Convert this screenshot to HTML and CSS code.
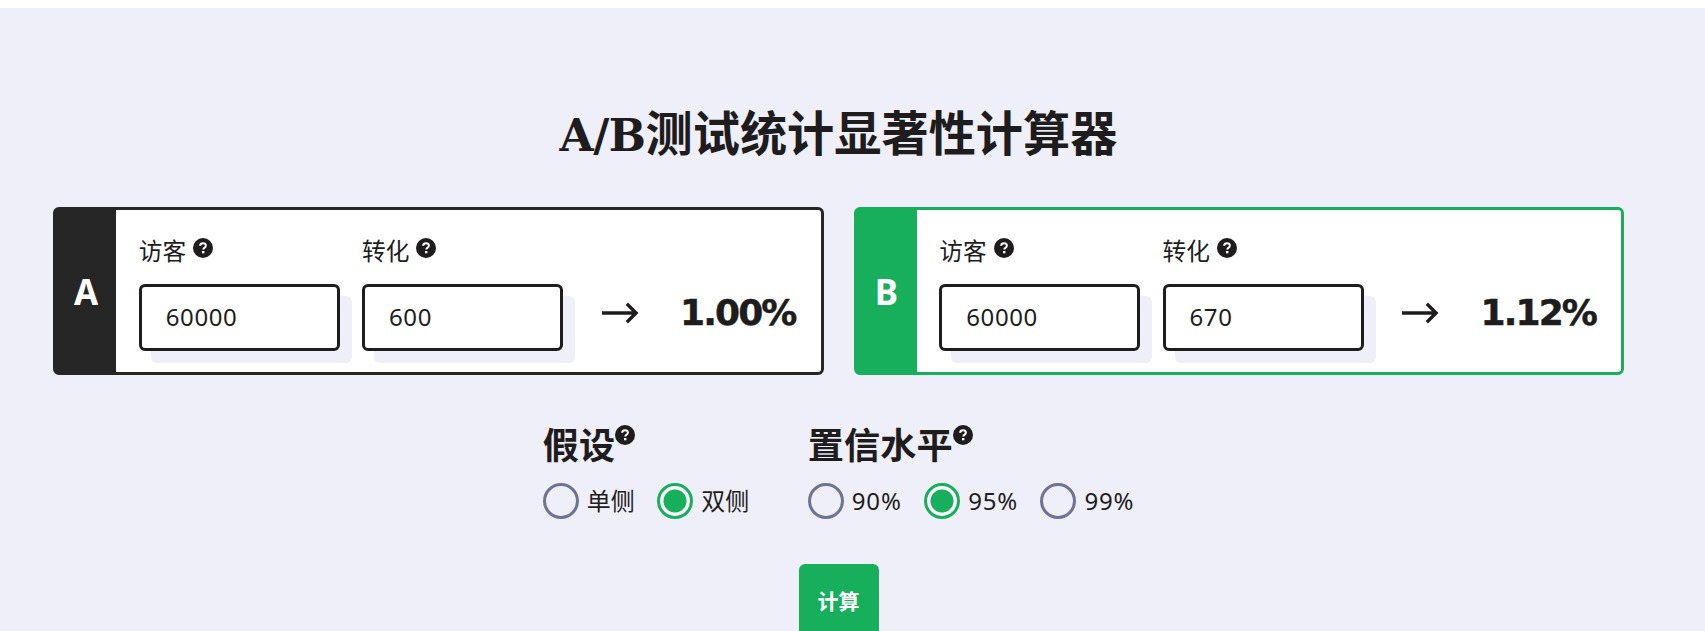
FILE: index.html
```html
<!DOCTYPE html>
<html lang="zh-CN">
<head>
    <meta charset="UTF-8">
    <meta name="viewport" content="width=device-width, initial-scale=1.0">
    <title>A/B测试统计显著性计算器</title>
    <link rel="stylesheet" href="styles.css">
</head>
<body>

    <svg class="icon-defs" width="0" height="0">
        <symbol id="help" viewBox="0 0 20 20">
            <circle cx="10" cy="10" r="10" fill="#1e1c1d"></circle>
            <path d="M7.1 7.700C7.200 6 8.400 5.200 10 5.200c1.700 0 2.900 1 2.900 2.400 0 1.200-.7 1.800-1.500 2.300-.8.500-1.100.8-1.100 1.600" fill="none" stroke="#fff" stroke-width="2"></path>
            <rect x="9" y="13" width="2.400" height="2.300" fill="#fff"></rect>
        </symbol>
        <symbol id="arrow" viewBox="0 0 37 22">
            <path d="M0 11H35M25.500 1.500 35 11l-9.500 9.500" fill="none" stroke="#1e1c1d" stroke-width="3.400"></path>
        </symbol>
    </svg>

    <main class="page">
        <h1 class="title"><span class="title-latin">A/B</span>测试统计显著性计算器</h1>

        <div class="variants">
            <!-- Variant A -->
            <section class="variant">
                <div class="variant-badge">A</div>
                <div class="variant-body">
                    <div class="field">
                        <label class="field-label">访客 <svg class="help"><use href="#help"></use></svg></label>
                        <div class="field-box"><input class="field-input" type="text" value="60000"></div>
                    </div>
                    <div class="field">
                        <label class="field-label">转化 <svg class="help"><use href="#help"></use></svg></label>
                        <div class="field-box"><input class="field-input" type="text" value="600"></div>
                    </div>
                    <svg class="arrow"><use href="#arrow"></use></svg>
                    <div class="rate">1.00%</div>
                </div>
            </section>

            <!-- Variant B -->
            <section class="variant variant-b">
                <div class="variant-badge">B</div>
                <div class="variant-body">
                    <div class="field">
                        <label class="field-label">访客 <svg class="help"><use href="#help"></use></svg></label>
                        <div class="field-box"><input class="field-input" type="text" value="60000"></div>
                    </div>
                    <div class="field">
                        <label class="field-label">转化 <svg class="help"><use href="#help"></use></svg></label>
                        <div class="field-box"><input class="field-input" type="text" value="670"></div>
                    </div>
                    <svg class="arrow"><use href="#arrow"></use></svg>
                    <div class="rate">1.12%</div>
                </div>
            </section>
        </div>

        <div class="options">
            <fieldset class="option-group">
                <legend class="option-title">假设<svg class="help help-raised"><use href="#help"></use></svg></legend>
                <div class="option-list">
                    <label class="option"><input type="radio" name="tail">单侧</label>
                    <label class="option"><input type="radio" name="tail" checked>双侧</label>
                </div>
            </fieldset>
            <fieldset class="option-group">
                <legend class="option-title">置信水平<svg class="help help-raised"><use href="#help"></use></svg></legend>
                <div class="option-list option-list-percent">
                    <label class="option"><input type="radio" name="level">90%</label>
                    <label class="option"><input type="radio" name="level" checked>95%</label>
                    <label class="option"><input type="radio" name="level">99%</label>
                </div>
            </fieldset>
        </div>

        <button class="submit" type="button">计算</button>
    </main>

</body>
</html>
```

FILE: styles.css
```css
html, body {
    height: 100%;
}

body {
    margin: 0;
    padding-top: 8px;
    box-sizing: border-box;
    overflow: hidden;
    background-color: #fff;
    color: #1e1c1d;
    font-family: "Noto Sans", "Noto Sans CJK SC", sans-serif;
}

.icon-defs {
    position: absolute;
}

.page {
    min-height: 100%;
    padding: 93px 28px 0 0;
    box-sizing: border-box;
    background-color: #eeeff8;
    display: flex;
    flex-direction: column;
    align-items: center;
}

.title {
    margin: 0 0 46px;
    font-family: "Noto Sans CJK SC", sans-serif;
    font-size: 47.200px;
    line-height: 60px;
    font-weight: 700;
}

.title-latin {
    font-family: "DejaVu Serif", serif;
    font-size: 44px;
    line-height: 0;
    letter-spacing: -0.500px;
}

/* Variant cards */
.variants {
    display: flex;
    gap: 30px;
}

.variant {
    width: 770.500px;
    box-sizing: border-box;
    display: flex;
    background-color: #fff;
    border: 3px solid #262626;
    border-radius: 6px;
}

.variant-badge {
    width: 60px;
    flex: none;
    display: flex;
    align-items: center;
    justify-content: center;
    background-color: #262626;
    color: #fff;
    font-size: 35px;
    font-weight: 700;
}

.variant-b {
    border-color: #17ae5c;
}

.variant-b .variant-badge {
    background-color: #17ae5c;
}

.variant-body {
    flex: 1;
    display: flex;
    align-items: flex-start;
    padding: 26px 25px 21px 22.750px;
}

.field {
    width: 201px;
    margin-right: 22.250px;
}

.field-label {
    display: flex;
    align-items: flex-start;
    gap: 7px;
    height: 30px;
    margin-bottom: 18px;
    font-size: 23.700px;
    line-height: 30px;
}

.help {
    width: 20px;
    height: 20px;
    flex: none;
    margin-top: 2px;
}

.field-box {
    position: relative;
    height: 67px;
    box-shadow: 12px 12px 0 #eeeff8;
    border-radius: 6px;
}

.field-input {
    width: 100%;
    height: 100%;
    box-sizing: border-box;
    padding: 0 24px 2px;
    border: 3px solid #1e1c1d;
    border-radius: 6px;
    background: #fff;
    color: #1e1c1d;
    font-family: inherit;
    font-size: 24px;
    letter-spacing: 0.600px;
}

.arrow {
    width: 36px;
    height: 22px;
    flex: none;
    margin: 66px 0 0 16.500px;
}

.rate {
    margin: 54px 0 0 auto;
    font-family: "DejaVu Sans", sans-serif;
    font-size: 36px;
    line-height: 46px;
    font-weight: 700;
    letter-spacing: -1.900px;
    -webkit-text-stroke: 0.500px #1e1c1d;
}

/* Hypothesis and confidence */
.options {
    display: flex;
    gap: 58.600px;
    margin-top: 48px;
}

.option-group {
    margin: 0;
    padding: 0;
    border: 0;
}

.option-title {
    display: flex;
    padding: 0;
    height: 44px;
    font-size: 36.200px;
    line-height: 44px;
    font-weight: 700;
}

.help-raised {
    margin-top: 2px;
}

.option-list {
    display: flex;
    gap: 22.500px;
    margin-top: 16px;
}

.option {
    display: flex;
    align-items: center;
    gap: 8px;
    font-size: 24px;
    line-height: 36px;
}

.option-list-percent .option {
    letter-spacing: 0.800px;
}

.option input {
    appearance: none;
    width: 36px;
    height: 36px;
    margin: 0;
    border: 3px solid #6e7490;
    border-radius: 50%;
    background: transparent;
}

.option input:checked {
    border-color: #17ae5c;
    background: radial-gradient(circle, #17ae5c 0 11px, #fff 12px);
}

.submit {
    width: 80px;
    height: 72px;
    flex: none;
    margin-top: 45px;
    border: 0;
    border-radius: 6px;
    background-color: #17ae5c;
    color: #fff;
    font-family: inherit;
    font-size: 21px;
    font-weight: 600;
}
```
